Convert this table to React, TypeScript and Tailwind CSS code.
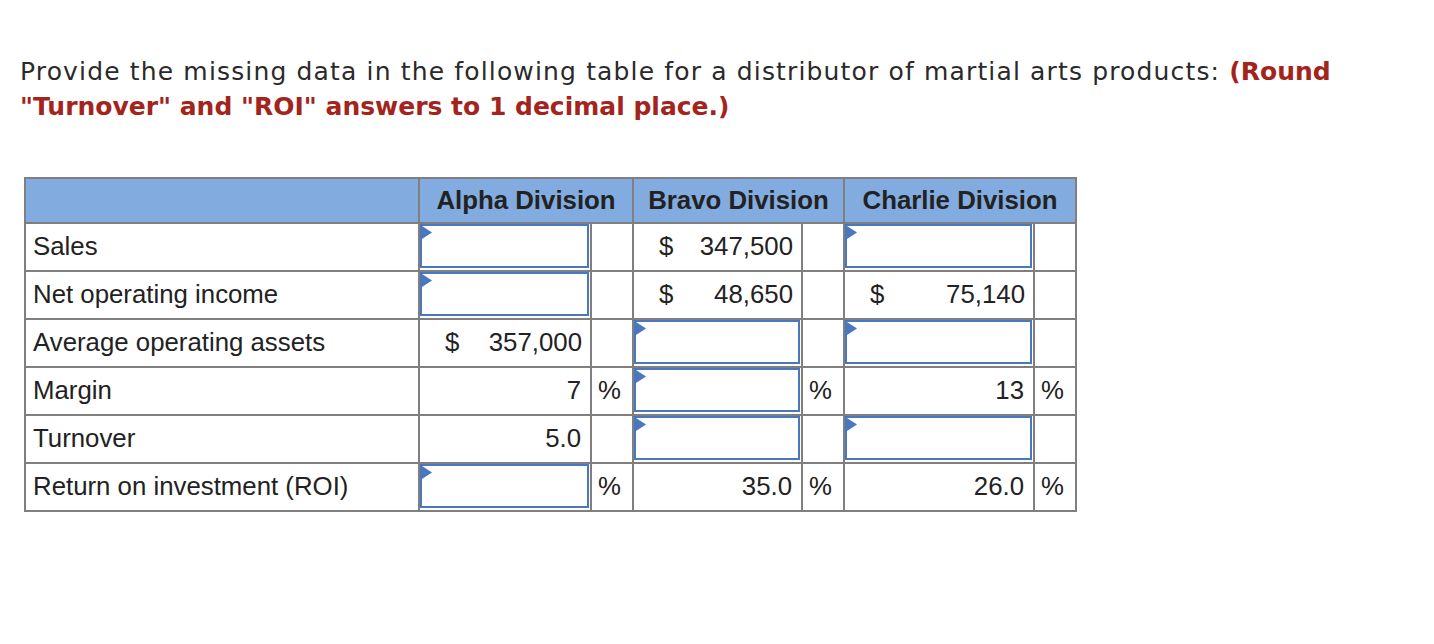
import type { ReactNode } from 'react';

type Cell =
  | { kind: 'input' }
  | { kind: 'money'; value: string }
  | { kind: 'num'; value: string }
  | { kind: 'empty' }
  | { kind: 'pct' };

const rows: { label: string; cells: Cell[] }[] = [
  {
    label: 'Sales',
    cells: [
      { kind: 'input' },
      { kind: 'empty' },
      { kind: 'money', value: '347,500' },
      { kind: 'empty' },
      { kind: 'input' },
      { kind: 'empty' },
    ],
  },
  {
    label: 'Net operating income',
    cells: [
      { kind: 'input' },
      { kind: 'empty' },
      { kind: 'money', value: '48,650' },
      { kind: 'empty' },
      { kind: 'money', value: '75,140' },
      { kind: 'empty' },
    ],
  },
  {
    label: 'Average operating assets',
    cells: [
      { kind: 'money', value: '357,000' },
      { kind: 'empty' },
      { kind: 'input' },
      { kind: 'empty' },
      { kind: 'input' },
      { kind: 'empty' },
    ],
  },
  {
    label: 'Margin',
    cells: [
      { kind: 'num', value: '7' },
      { kind: 'pct' },
      { kind: 'input' },
      { kind: 'pct' },
      { kind: 'num', value: '13' },
      { kind: 'pct' },
    ],
  },
  {
    label: 'Turnover',
    cells: [
      { kind: 'num', value: '5.0' },
      { kind: 'empty' },
      { kind: 'input' },
      { kind: 'empty' },
      { kind: 'input' },
      { kind: 'empty' },
    ],
  },
  {
    label: 'Return on investment (ROI)',
    cells: [
      { kind: 'input' },
      { kind: 'pct' },
      { kind: 'num', value: '35.0' },
      { kind: 'pct' },
      { kind: 'num', value: '26.0' },
      { kind: 'pct' },
    ],
  },
];

function AnswerBox() {
  return (
    <div className="relative h-[44px] mr-[1px] mb-[2px] border-2 border-[#4a77bf] bg-white">
      <svg className="absolute left-0 top-0" width="10" height="13" viewBox="0 0 10 13">
        <polygon points="0,0 10,6.5 0,13" fill="#4a77c0" />
      </svg>
    </div>
  );
}

function renderCell(cell: Cell): ReactNode {
  switch (cell.kind) {
    case 'input':
      return <AnswerBox />;
    case 'money':
      return (
        <div className="flex h-[46px] items-center justify-between pl-[25px] pr-[8px]">
          <span>$</span>
          <span>{cell.value}</span>
        </div>
      );
    case 'num':
      return (
        <div className="flex h-[46px] items-center justify-end pr-[9px]">{cell.value}</div>
      );
    case 'pct':
      return <div className="flex h-[46px] items-center pl-[6px]">%</div>;
    default:
      return <div className="h-[46px]" />;
  }
}

export default function App() {
  return (
    <div className="min-h-screen bg-white pt-[54px] text-[#222]">
      <p
        className="pl-[20px] text-[25px] leading-[35px] tracking-[1.15px] text-[#2a2a2a]"
        style={{ fontFamily: '"DejaVu Sans", sans-serif' }}
      >
        Provide the missing data in the following table for a distributor of martial arts products:{' '}
        <strong className="font-bold tracking-normal text-[#a3241d]">
          (Round
          <br />
          "Turnover" and "ROI" answers to 1 decimal place.)
        </strong>
      </p>

      <div
        className="ml-[24px] mt-[53px] grid w-fit grid-cols-[392px_170px_40px_167px_40px_188px_40px] gap-[2px] bg-[#7f7f7f] p-[2px] text-[25.8px] leading-none text-[#222]"
        style={{ fontFamily: '"Liberation Sans", Arial, sans-serif' }}
      >
        <div className="h-[43px] bg-[#82abdf]" />
        <div className="col-span-2 flex h-[43px] items-center justify-center bg-[#82abdf] font-bold">
          Alpha Division
        </div>
        <div className="col-span-2 flex h-[43px] items-center justify-center bg-[#82abdf] font-bold">
          Bravo Division
        </div>
        <div className="col-span-2 flex h-[43px] items-center justify-center bg-[#82abdf] font-bold">
          Charlie Division
        </div>

        {rows.map((row) => (
          <div key={row.label} className="contents">
            <div className="flex h-[46px] items-center bg-white pl-[7px]">{row.label}</div>
            {row.cells.map((cell, i) => (
              <div key={i} className="bg-white">
                {renderCell(cell)}
              </div>
            ))}
          </div>
        ))}
      </div>
    </div>
  );
}
